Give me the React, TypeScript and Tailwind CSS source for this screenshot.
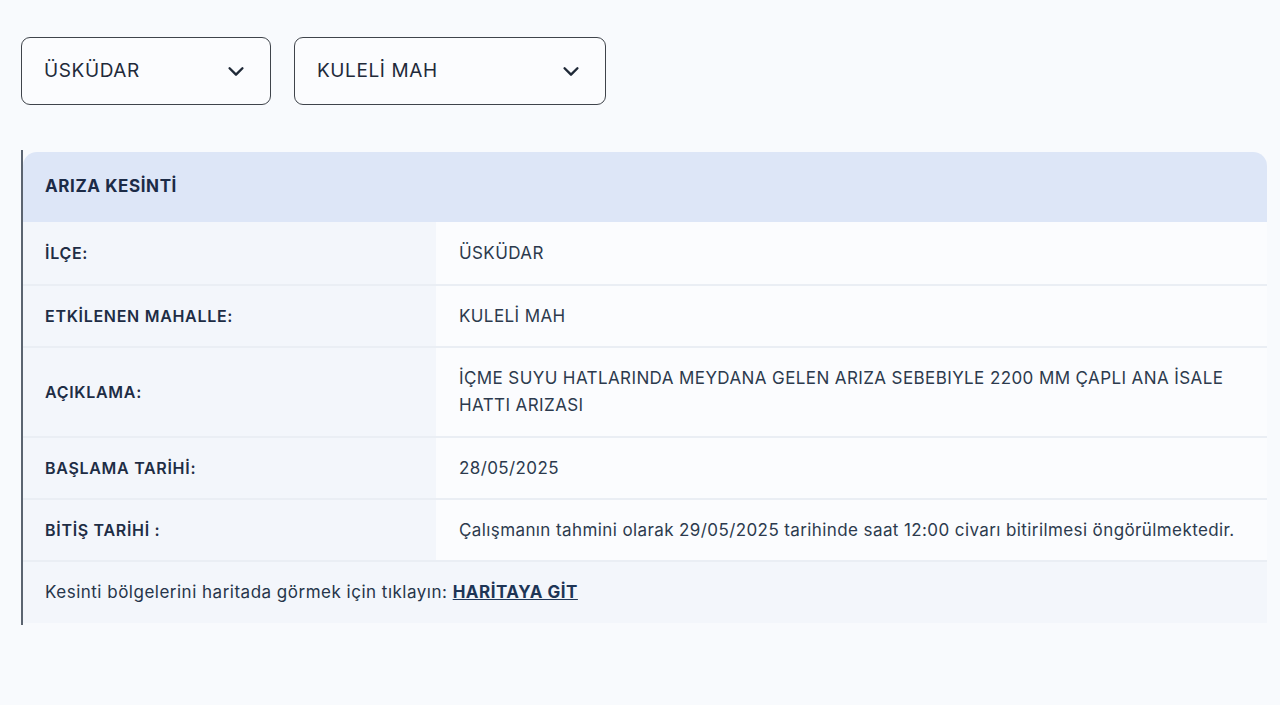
import React from "react";

function Chevron() {
  return (
    <svg width="22" height="22" viewBox="0 0 24 24" fill="none" stroke="#1f2937" strokeWidth="2.6" strokeLinecap="round" strokeLinejoin="round">
      <path d="M5 9l7 7 7-7" />
    </svg>
  );
}

function Select({ label, w }: { label: string; w: string }) {
  return (
    <div className={`${w} h-[68px] rounded-[9px] border border-[#3f444b] bg-[#fbfcfe] flex items-center justify-between pl-[22px] pr-[23px]`}>
      <span className="text-[19px] tracking-[0.6px] text-[#1f2a3a]">{label}</span>
      <Chevron />
    </div>
  );
}

function Row({ label, children, h }: { label: string; children: React.ReactNode; h: string }) {
  return (
    <div className={`grid grid-cols-[413px_1fr] ${h} border-b-2 border-[#eaeef4]`}>
      <div className="bg-[#f3f6fb] flex items-center pl-[22px] text-[16px] tracking-[0.7px] font-semibold text-[#1e2d45]">{label}</div>
      <div className="bg-[#fbfcfe] flex items-center pl-[23px] pr-[20px] text-[17px] tracking-[0.4px] text-[#2c3a4d] leading-[27px]">{children}</div>
    </div>
  );
}

export default function App() {
  return (
    <div className="min-h-[705px] bg-[#f8fafd]" style={{ fontFamily: "Inter, 'Noto Sans', sans-serif" }}>
      <div className="pt-[37px] pl-[21px] flex gap-[23px]">
        <Select label="ÜSKÜDAR" w="w-[250px]" />
        <Select label="KULELİ MAH" w="w-[312px]" />
      </div>
      <div className="mt-[45px] ml-[21px] mr-[13px] flex">
        <div className="w-[2px] bg-[#5b6470] shrink-0" />
        <div className="flex-1 my-[2px] rounded-t-[14px] overflow-hidden">
          <div className="h-[70px] bg-[#dde6f7] flex items-center pl-[22px] text-[17px] tracking-[0.6px] font-bold text-[#1c2b47]">
            ARIZA KESİNTİ
          </div>
          <Row label="İLÇE:" h="h-[64px]">ÜSKÜDAR</Row>
          <Row label="ETKİLENEN MAHALLE:" h="h-[62px]">KULELİ MAH</Row>
          <Row label="AÇIKLAMA:" h="h-[90px]">
            <span>
              İÇME SUYU HATLARINDA MEYDANA GELEN ARIZA SEBEBIYLE 2200 MM ÇAPLI ANA İSALE
              <br />
              HATTI ARIZASI
            </span>
          </Row>
          <Row label="BAŞLAMA TARİHİ:" h="h-[62px]">28/05/2025</Row>
          <Row label="BİTİŞ TARİHİ :" h="h-[62px]">
            Çalışmanın tahmini olarak 29/05/2025 tarihinde saat 12:00 civarı bitirilmesi öngörülmektedir.
          </Row>
          <div className="h-[61px] bg-[#f3f6fb] flex items-center pl-[22px] text-[17px] tracking-[0.5px] text-[#26354a]">
            <span>Kesinti bölgelerini haritada görmek için tıklayın:&nbsp;</span>
            <a href="#" className="font-bold underline text-[#1e3556]">HARİTAYA GİT</a>
          </div>
        </div>
      </div>
    </div>
  );
}
